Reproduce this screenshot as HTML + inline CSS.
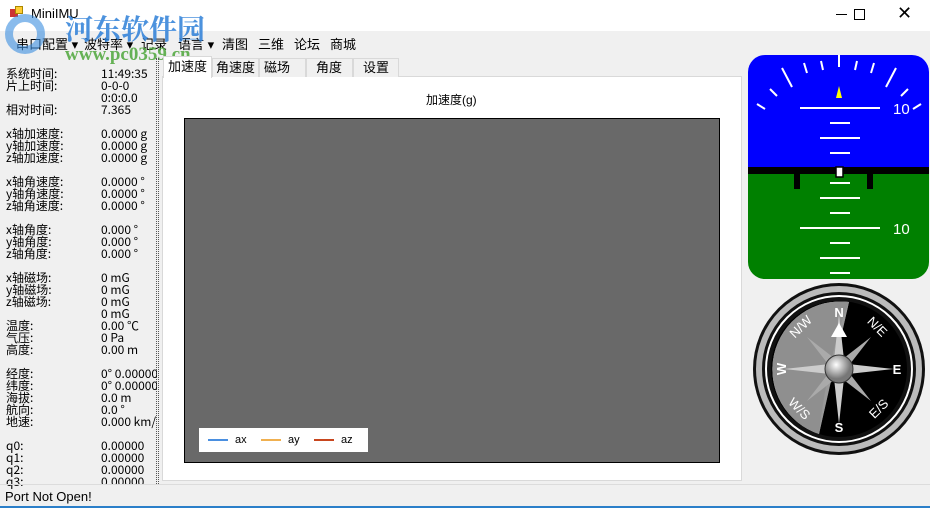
<!DOCTYPE html>
<html><head><meta charset="utf-8"><style>
*{margin:0;padding:0;box-sizing:border-box}
body{width:930px;height:508px;overflow:hidden;background:#f0f0f0;font-family:"Liberation Sans","Noto Sans CJK SC",sans-serif;position:relative}
.a{position:absolute;white-space:nowrap}
.lt{font-size:12px;line-height:12px;color:#000;font-family:"Noto Sans CJK SC","Liberation Mono",monospace}
.menu{font-size:13px;top:34px}
.tab{position:absolute;top:58px;height:19px;border:1px solid #d9d9d9;border-bottom:none;background:#f0f0f0;font-size:13px;line-height:18px;padding-left:9px}
</style></head><body>
<div class="a" style="left:0;top:0;width:930px;height:31px;background:#fff"></div>
<div class="a" style="left:10px;top:9px;width:8px;height:8px;background:#c33"></div>
<div class="a" style="left:15px;top:6px;width:8px;height:8px;background:#fc3;border:1px solid #a80"></div>
<div class="a" style="left:31px;top:6px;font-size:13px">MiniIMU</div>
<div class="a" style="left:836px;top:14px;width:11px;height:1px;background:#000"></div>
<div class="a" style="left:854px;top:9px;width:11px;height:11px;border:1px solid #000"></div>
<div class="a" style="left:897px;top:3px;font-size:18px;font-weight:300">✕</div>
<div class="a menu" style="left:16px">串口配置 ▾</div>
<div class="a menu" style="left:84px">波特率 ▾</div>
<div class="a menu" style="left:141px">记录</div>
<div class="a menu" style="left:178px">语言 ▾</div>
<div class="a menu" style="left:222px">清图</div>
<div class="a menu" style="left:258px">三维</div>
<div class="a menu" style="left:294px">论坛</div>
<div class="a menu" style="left:330px">商城</div>
<div class="a" style="left:65px;top:8px;font-size:28px;font-weight:bold;color:#2d7fd8;opacity:.85;font-family:'Noto Serif CJK SC',serif">河东软件园</div>
<div class="a" style="left:65px;top:44px;font-size:19px;font-weight:bold;color:#4da73a;opacity:.85;font-family:'Liberation Serif',serif">www.pc0359.cn</div>
<div class="a" style="left:5px;top:14px;width:40px;height:40px;border-radius:50%;border:8px solid #3a8de0;opacity:.6"></div>
<div class="a" style="left:156px;top:58px;width:3px;height:426px;border-left:1px dotted #555;border-right:1px dotted #555"></div>
<div class="a lt" style="left:6px;top:68px;line-height:12px">
系统时间:<br>片上时间:<br><br>相对时间:<br><br>x轴加速度:<br>y轴加速度:<br>z轴加速度:<br><br>x轴角速度:<br>y轴角速度:<br>z轴角速度:<br><br>x轴角度:<br>y轴角度:<br>z轴角度:<br><br>x轴磁场:<br>y轴磁场:<br>z轴磁场:<br><br>温度:<br>气压:<br>高度:<br><br>经度:<br>纬度:<br>海拔:<br>航向:<br>地速:<br><br>q0:<br>q1:<br>q2:<br>q3:</div>
<div class="a lt" style="left:101px;top:68px;width:56px;overflow:hidden;height:416px">
11:49:35<br>0-0-0<br>0:0:0.0<br>7.365<br><br>0.0000 g<br>0.0000 g<br>0.0000 g<br><br>0.0000 °<br>0.0000 °<br>0.0000 °<br><br>0.000 °<br>0.000 °<br>0.000 °<br><br>0 mG<br>0 mG<br>0 mG<br>0 mG<br>0.00 ℃<br>0 Pa<br>0.00 m<br><br>0° 0.00000<br>0° 0.00000<br>0.0 m<br>0.0 °<br>0.000 km/h<br><br>0.00000<br>0.00000<br>0.00000<br>0.00000</div>
<div class="a" style="left:162px;top:76px;width:580px;height:405px;background:#fff;border:1px solid #d9d9d9"></div>
<div class="tab" style="left:212px;width:47px;padding-left:3px">角速度</div>
<div class="tab" style="left:259px;width:47px;padding-left:4px">磁场</div>
<div class="tab" style="left:306px;width:47px">角度</div>
<div class="tab" style="left:353px;width:46px">设置</div>
<div class="a" style="left:163px;top:56px;width:49px;height:22px;background:#fff;border:1px solid #d9d9d9;border-bottom:none;font-size:13px;line-height:20px;padding-left:4px">加速度</div>
<div class="a" style="left:426px;top:91px;font-size:12px">加速度(g)</div>
<div class="a" style="left:184px;top:118px;width:536px;height:345px;background:#696969;border:1px solid #000"></div>
<div class="a" style="left:199px;top:428px;width:169px;height:24px;background:#fff;font-size:11px;line-height:24px">
<span class="a" style="left:9px;top:11px;width:20px;height:2px;background:#4a8fe0"></span><span class="a" style="left:36px;top:0">ax</span>
<span class="a" style="left:62px;top:11px;width:20px;height:2px;background:#f0b050"></span><span class="a" style="left:89px;top:0">ay</span>
<span class="a" style="left:115px;top:11px;width:20px;height:2px;background:#c8461e"></span><span class="a" style="left:142px;top:0">az</span></div>
<div class="a" style="left:0;top:484px;width:930px;height:1px;background:#dcdcdc"></div>
<div class="a" style="left:5px;top:489px;font-size:13px">Port Not Open!</div>
<div class="a" style="left:0;top:506px;width:930px;height:2px;background:#2b7fc9"></div>
<svg class="a" style="left:748px;top:55px" width="181" height="224" viewBox="0 0 181 224">
<defs><clipPath id="c"><rect width="181" height="224" rx="17"/></clipPath></defs>
<g clip-path="url(#c)">
<rect width="181" height="112" fill="#0000ff"/><rect y="112" width="181" height="112" fill="#008000"/>
<rect y="112" width="181" height="7" fill="#000"/>
<path d="M46 112v22h6v-15h67v15h6v-22" fill="#000"/>
<rect x="88" y="112" width="7" height="10" fill="#fff" stroke="#000" stroke-width="1.5"/>
<g stroke="#fff" stroke-width="2">
<line x1="91" y1="0" x2="91" y2="12"/>
<line x1="34" y1="13" x2="44" y2="32"/><line x1="148" y1="13" x2="138" y2="32"/>
<line x1="56" y1="8" x2="59" y2="18"/><line x1="126" y1="8" x2="123" y2="18"/>
<line x1="73" y1="6" x2="75" y2="15"/><line x1="109" y1="6" x2="107" y2="15"/>
<line x1="22" y1="34" x2="29" y2="41"/><line x1="160" y1="34" x2="153" y2="41"/>
<line x1="9" y1="49" x2="17" y2="54"/><line x1="173" y1="49" x2="165" y2="54"/>
<line x1="52" y1="53" x2="132" y2="53"/><line x1="82" y1="68" x2="102" y2="68"/><line x1="72" y1="83" x2="112" y2="83"/><line x1="82" y1="98" x2="102" y2="98"/>
<line x1="82" y1="128" x2="102" y2="128"/><line x1="72" y1="143" x2="112" y2="143"/><line x1="82" y1="158" x2="102" y2="158"/><line x1="52" y1="173" x2="132" y2="173"/><line x1="82" y1="188" x2="102" y2="188"/><line x1="72" y1="203" x2="112" y2="203"/><line x1="82" y1="218" x2="102" y2="218"/>
</g>
<path d="M88 43l3-12 3 12z" fill="#ff0"/>
<text x="145" y="59" fill="#fff" font-size="15" font-family="Liberation Sans">10</text>
<text x="145" y="179" fill="#fff" font-size="15" font-family="Liberation Sans">10</text>
</g></svg>
<svg class="a" style="left:752px;top:282px" width="174" height="174" viewBox="-87 -87 174 174">
<defs><radialGradient id="r" cx=".4" cy=".35"><stop offset="0" stop-color="#fff"/><stop offset="1" stop-color="#777"/></radialGradient></defs>
<circle r="86" fill="#111"/><circle r="80" fill="none" stroke="#bbb" stroke-width="6"/><circle r="73" fill="none" stroke="#fff" stroke-width="2"/>
<circle r="68" fill="#000"/>
<path d="M10 -67A68 68 0 0 0 -20 65L-10 20 Z" fill="#8c8c8c"/>
<path d="M10 -67L-20 65A68 68 0 0 1 10 -67" fill="#999"/>
<path d="M-20 65A68 68 0 0 1 10 -67C-5 -30 -15 20 -20 65" fill="#8f8f8f"/>
<g fill="#ccc"><path d="M0 -55L6 0 0 55 -6 0Z"/><path d="M-55 0L0 -6 55 0 0 6Z"/><path d="M-32 -32L4 -4 32 32 -4 4Z" fill="#aaa"/><path d="M32 -32L4 4 -32 32 -4 -4Z" fill="#aaa"/></g>
<circle r="14" fill="url(#r)" stroke="#333"/>
<path d="M0 -46l-8 14h16z" fill="#fff"/>
<g fill="#fff" font-family="Liberation Sans" font-weight="bold" font-size="13" text-anchor="middle">
<text y="-52">N</text><text y="63">S</text><text x="58" y="5">E</text><text x="-58" y="5" transform="rotate(-90 -58 0)">W</text>
<text x="38" y="-38" font-weight="normal" transform="rotate(45 38 -42)">N/E</text><text x="-38" y="-38" font-weight="normal" transform="rotate(-45 -38 -42)">N/W</text>
<text x="40" y="44" font-weight="normal" transform="rotate(-45 40 40)">E/S</text><text x="-40" y="44" font-weight="normal" transform="rotate(45 -40 40)">W/S</text></g>
</svg>
</body></html>
